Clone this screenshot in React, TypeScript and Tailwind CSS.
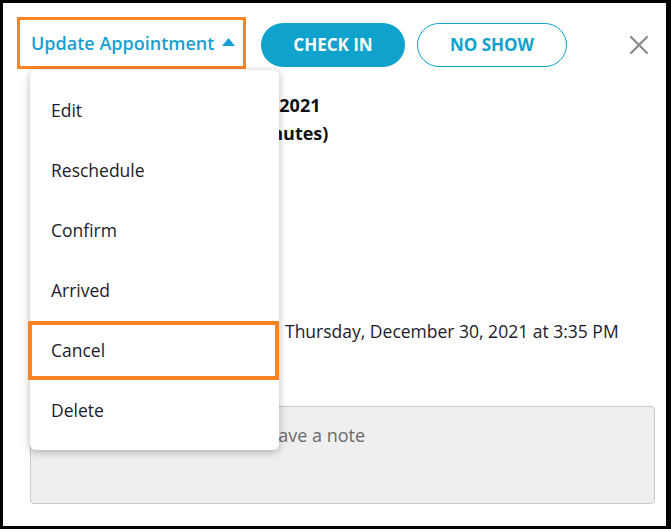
import { X } from "lucide-react";

const items = ["Edit", "Reschedule", "Confirm", "Arrived", "Cancel", "Delete"];

export default function App() {
  return (
    <div className="h-[532px] w-[671px] bg-white" style={{ fontFamily: '"Open Sans", sans-serif' }}>
      <div className="relative h-[529px] w-[671px] border-b-[3px] border-l-[3px] border-r-[5px] border-t-[3px] border-black">
        {/* header */}
        <div className="flex items-start pl-[14px] pt-[14px]">
          <button className="flex h-[52px] w-[229px] items-center border-[3px] border-[#fd8327] pl-[11px] text-[18px] font-semibold text-[#179fd3]">
            Update Appointment
            <svg width="13" height="8" viewBox="0 0 13 8" className="ml-[8px] mb-[2px]">
              <path d="M0 8 L6.5 0 L13 8 Z" fill="#179fd3" />
            </svg>
          </button>
          <button className="ml-[15px] mt-[6px] h-[44px] w-[144px] rounded-full bg-[#0ea2cc] text-[17px] font-bold text-white">
            CHECK IN
          </button>
          <button className="ml-[12px] mt-[6px] h-[44px] w-[150px] rounded-full border border-[#0ea2cc] text-[17px] font-bold text-[#0ea2cc]">
            NO SHOW
          </button>
          <button className="ml-[56px] mt-[12px] text-[#8a8a8a]">
            <X size={32} strokeWidth={1.6} />
          </button>
        </div>

        {/* body behind the menu */}
        <div className="pl-[56px] pt-[22px] text-[18px] font-bold leading-[28px] text-[#111]">
          <p>Thursday, December 30, 2021</p>
          <p>3:35 PM - 4:20 PM (45 minutes)</p>
        </div>
        <div className="mt-[171px] flex pl-[48px] text-[17.5px] text-[#1b1b2b]">
          <span className="w-[234px]">Booked online:</span>
          <span>Thursday, December 30, 2021 at 3:35 PM</span>
        </div>
        <div className="ml-[27px] mt-[62px] h-[98px] w-[625px] rounded-[4px] border border-[#c9c9c9] bg-[#efefef] py-[14px] pl-[24px] pr-[14px] text-[18px] leading-[28px] text-[#6b6b6b]">
          Add a comment here, or leave a note
        </div>

        {/* dropdown menu */}
        <div className="absolute left-[27px] top-[67px] w-[249px] rounded-[6px] bg-white py-[10px] shadow-[0_2px_8px_rgba(0,0,0,0.28)]">
          {items.map((it) => (
            <div key={it} className="relative flex h-[60px] items-center pl-[21px] text-[17.5px] text-[#1b1b2b]">
              {it}
              {it === "Cancel" && (
                <span className="absolute -left-[2px] right-0 top-[1px] bottom-0 border-4 border-[#fd8327]" />
              )}
            </div>
          ))}
        </div>
      </div>
    </div>
  );
}
